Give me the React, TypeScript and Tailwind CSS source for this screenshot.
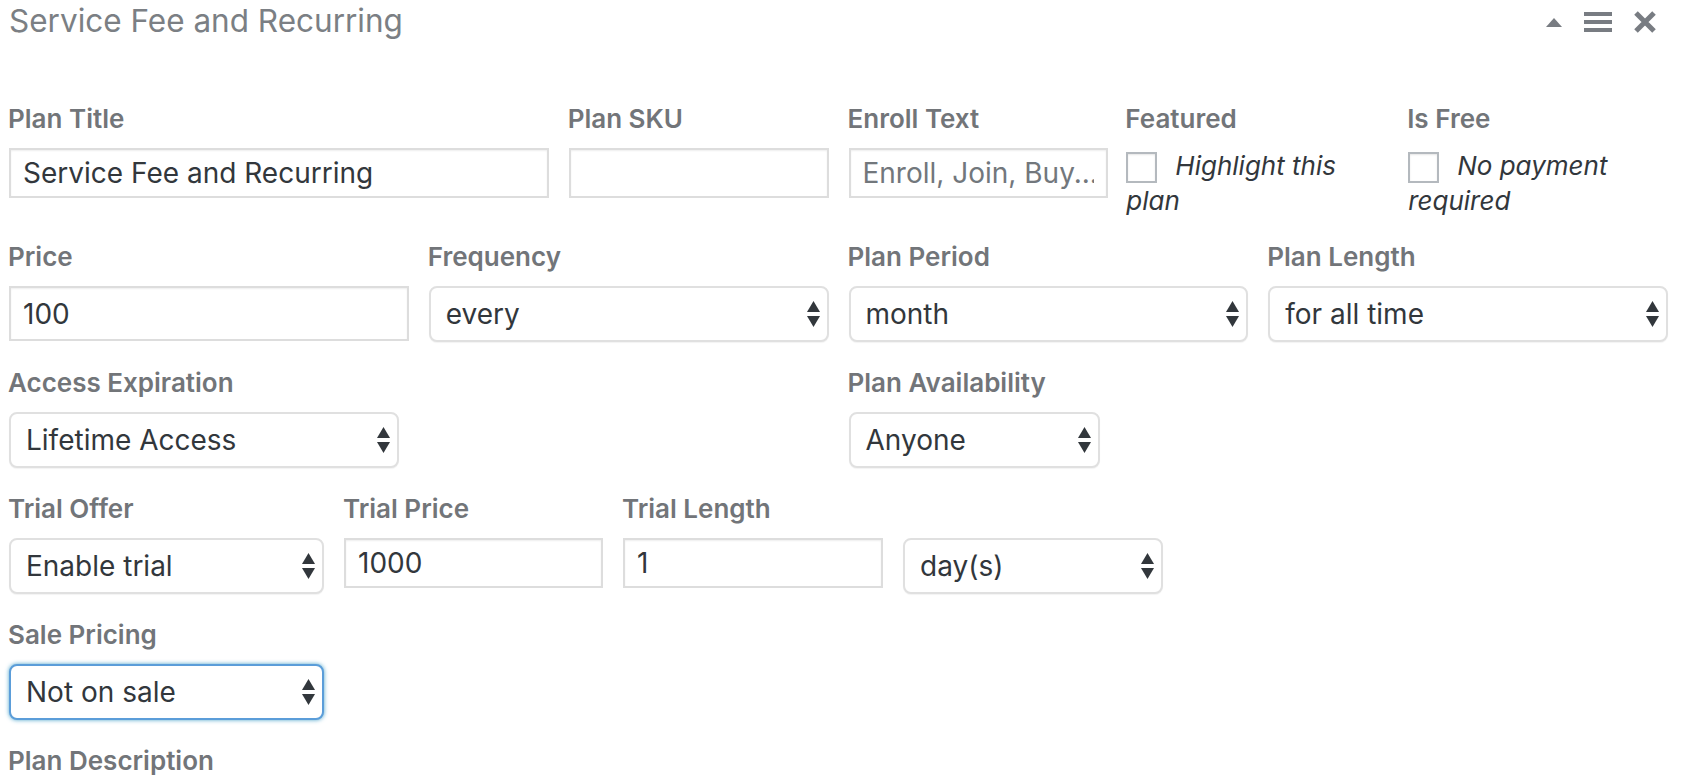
import type { ReactNode } from "react";

const Arrows = () => (
  <svg width="13" height="27" viewBox="0 0 13 27" className="shrink-0">
    <polygon points="6.5,0 13,11 0,11" fill="#32373c" />
    <polygon points="0,15 13,15 6.5,26" fill="#32373c" />
  </svg>
);

const Select = ({ value, className = "", focused = false }: { value: string; className?: string; focused?: boolean }) => (
  <div
    className={`flex h-[56px] items-center justify-between rounded-[8px] border-2 bg-white pl-[15px] pr-[7px] text-[28px] text-[#32373c] ${
      focused
        ? "border-[#5b9dd9] shadow-[0_0_4px_rgba(30,140,190,0.8)]"
        : "border-[#e0e0e0] shadow-[0_1px_1px_rgba(0,0,0,0.05)]"
    } ${className}`}
  >
    <span>{value}</span>
    <Arrows />
  </div>
);

const TextInput = ({ value = "", placeholder, className = "h-[50px]" }: { value?: string; placeholder?: string; className?: string }) => (
  <input
    readOnly
    value={value}
    placeholder={placeholder}
    className={`block w-full border-2 border-[#dddddd] bg-white px-[12px] text-[28px] text-[#32373c] shadow-[inset_0_1px_2px_rgba(0,0,0,0.07)] outline-none placeholder:text-[#72777c] ${className}`}
  />
);

const Field = ({ label, children, className = "" }: { label?: string; children: ReactNode; className?: string }) => (
  <div className={className}>
    <div className="-ml-[1px] h-[30px] text-[26px] font-semibold leading-[30px] text-[#727579]">{label}</div>
    <div className="mt-[14px]">{children}</div>
  </div>
);

const Checkbox = ({ first, second }: { first: string; second: string }) => (
  <div className="text-[26px] italic leading-[35px] text-[#32373c]">
    <span className="mr-[18px] inline-block h-[31px] w-[31px] border-2 border-[#b4b9be] bg-white align-middle shadow-[inset_0_1px_2px_rgba(0,0,0,0.1)]" />
    {first}
    <br />
    {second}
  </div>
);

export default function App() {
  return (
    <div className="min-h-screen bg-white pl-[9px] pr-[30px] font-['Inter','Noto_Sans',sans-serif]">
      {/* Header */}
      <div className="flex h-[42px] items-center justify-between pr-[12px]">
        <h2 className="text-[31.5px] font-normal text-[#7b7f84]">Service Fee and Recurring</h2>
        <div className="mt-[2px] flex items-center gap-[22px]">
          <svg width="16" height="9" viewBox="0 0 16 9">
            <polygon points="8,0 16,9 0,9" fill="#787c82" />
          </svg>
          <svg width="28" height="20" viewBox="0 0 28 20">
            <rect x="0" y="0" width="28" height="4" fill="#787c82" />
            <rect x="0" y="8" width="28" height="4" fill="#787c82" />
            <rect x="0" y="16" width="28" height="4" fill="#787c82" />
          </svg>
          <svg width="22" height="22" viewBox="0 0 22 22">
            <path d="M2 2 L20 20 M20 2 L2 20" stroke="#787c82" strokeWidth="5" />
          </svg>
        </div>
      </div>

      {/* Row 1 */}
      <div className="mt-[62px] grid grid-cols-6 gap-x-[20px]">
        <Field label="Plan Title" className="col-span-2">
          <TextInput value="Service Fee and Recurring" />
        </Field>
        <Field label="Plan SKU">
          <TextInput />
        </Field>
        <Field label="Enroll Text">
          <TextInput placeholder="Enroll, Join, Buy..." />
        </Field>
        <Field label="Featured" className="-ml-[2px]">
          <Checkbox first="Highlight this" second="plan" />
        </Field>
        <Field label="Is Free">
          <Checkbox first="No payment" second="required" />
        </Field>
      </div>

      {/* Row 2 */}
      <div className="mt-[24px] grid grid-cols-4 gap-x-[20px]">
        <Field label="Price">
          <TextInput value="100" className="h-[55px]" />
        </Field>
        <Field label="Frequency">
          <Select value="every" />
        </Field>
        <Field label="Plan Period">
          <Select value="month" />
        </Field>
        <Field label="Plan Length">
          <Select value="for all time" />
        </Field>
      </div>

      {/* Row 3 */}
      <div className="mt-[26px] grid grid-cols-4 gap-x-[20px]">
        <Field label="Access Expiration" className="col-span-2">
          <Select value="Lifetime Access" className="w-[390px]" />
        </Field>
        <Field label="Plan Availability" className="col-span-2">
          <Select value="Anyone" className="w-[251px]" />
        </Field>
      </div>

      {/* Row 4 */}
      <div className="mt-[26px] flex gap-x-[20px]">
        <Field label="Trial Offer" className="w-[315px]">
          <Select value="Enable trial" />
        </Field>
        <Field label="Trial Price" className="w-[259px]">
          <TextInput value="1000" />
        </Field>
        <Field label="Trial Length" className="w-[260px]">
          <TextInput value="1" />
        </Field>
        <Field className="w-[260px]">
          <Select value="day(s)" />
        </Field>
      </div>

      {/* Row 5 */}
      <div className="mt-[26px]">
        <Field label="Sale Pricing" className="w-[315px]">
          <Select value="Not on sale" focused />
        </Field>
      </div>

      {/* Row 6 */}
      <div className="-ml-[1px] mt-[26px] h-[30px] text-[26px] font-semibold leading-[30px] text-[#727579]">Plan Description</div>
    </div>
  );
}
